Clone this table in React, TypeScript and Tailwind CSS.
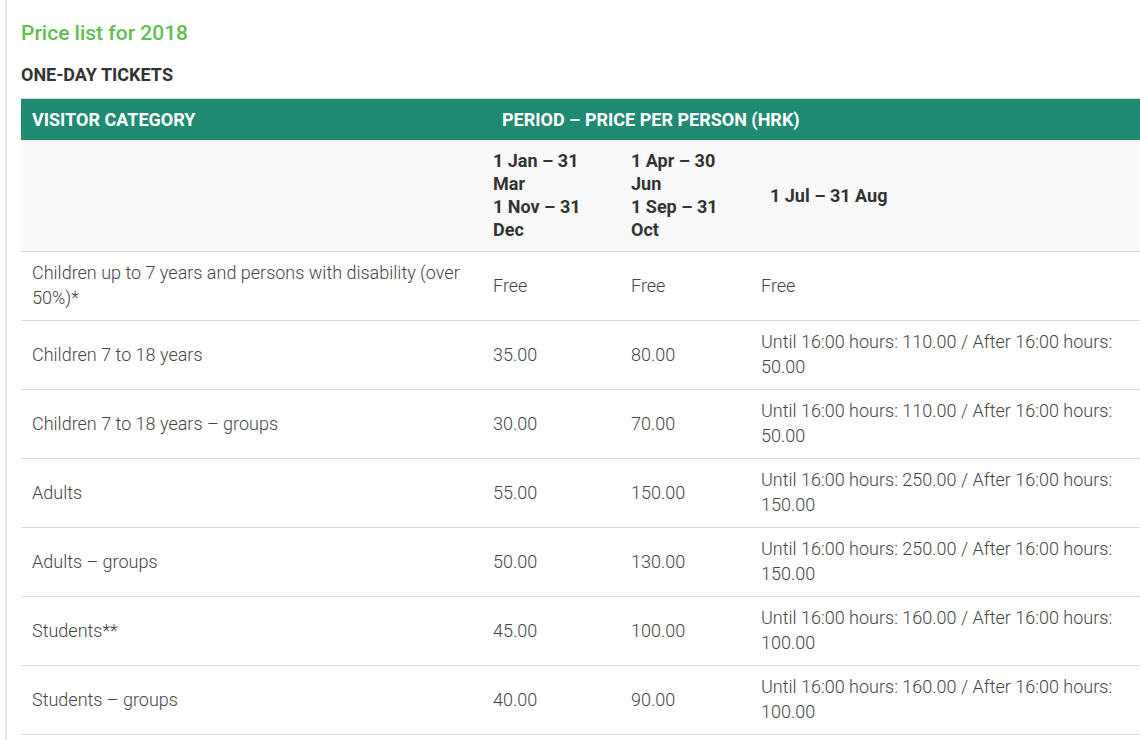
const rows: [string, string, string, string][] = [
  ["Children up to 7 years and persons with disability (over 50%)*", "Free", "Free", "Free"],
  ["Children 7 to 18 years", "35.00", "80.00", "Until 16:00 hours: 110.00 / After 16:00 hours: 50.00"],
  ["Children 7 to 18 years – groups", "30.00", "70.00", "Until 16:00 hours: 110.00 / After 16:00 hours: 50.00"],
  ["Adults", "55.00", "150.00", "Until 16:00 hours: 250.00 / After 16:00 hours: 150.00"],
  ["Adults – groups", "50.00", "130.00", "Until 16:00 hours: 250.00 / After 16:00 hours: 150.00"],
  ["Students**", "45.00", "100.00", "Until 16:00 hours: 160.00 / After 16:00 hours: 100.00"],
  ["Students – groups", "40.00", "90.00", "Until 16:00 hours: 160.00 / After 16:00 hours: 100.00"],
];

export default function App() {
  return (
    <div className="h-[740px] w-[1140px] overflow-hidden bg-white font-['Roboto',sans-serif]">
      <div className="ml-[5px] h-full border-l-2 border-[#e6e6e6] pl-[14px] pt-[21px]">
        <h2 className="mb-[20px] text-[21px] font-medium leading-[24px] text-[#62bd52]">Price list for 2018</h2>
        <h3 className="mb-[13px] text-[18px] font-bold leading-[20px] text-[#333]">ONE-DAY TICKETS</h3>

        <table className="w-[1122px] table-fixed border-collapse text-[18px]">
          <colgroup>
            <col className="w-[461px]" />
            <col className="w-[138px]" />
            <col className="w-[130px]" />
            <col className="w-[393px]" />
          </colgroup>
          <thead>
            <tr className="border-t border-[#dddddd] bg-[#218a73] text-left font-bold leading-[23px] text-white">
              <th className="px-[11px] py-[9px] font-bold">VISITOR CATEGORY</th>
              <th colSpan={3} className="py-[9px] pl-5 pr-[11px] font-bold">
                PERIOD – PRICE PER PERSON (HRK)
              </th>
            </tr>
            <tr className="border-b border-[#dddddd] bg-[#f9f9f9] text-left font-bold leading-[23px] text-[#333]">
              <th className="px-[11px] pb-[10px] pt-[9px]"></th>
              <th className="px-[11px] pb-[10px] pt-[9px] font-bold">
                1 Jan – 31 Mar
                <br />1 Nov – 31 Dec
              </th>
              <th className="px-[11px] pb-[10px] pt-[9px] font-bold">
                1 Apr – 30 Jun
                <br />1 Sep – 31 Oct
              </th>
              <th className="pb-[10px] pl-5 pr-[11px] pt-[9px] font-bold">1 Jul – 31 Aug</th>
            </tr>
          </thead>
          <tbody>
            {rows.map((r) => (
              <tr key={r[0]} className="border-b border-[#dddddd] font-light leading-[25px] text-[#444]">
                {r.map((c, i) => (
                  <td key={i} className="px-[11px] pb-[10px] pt-[8px] align-middle">
                    {c}
                  </td>
                ))}
              </tr>
            ))}
          </tbody>
        </table>
      </div>
    </div>
  );
}
